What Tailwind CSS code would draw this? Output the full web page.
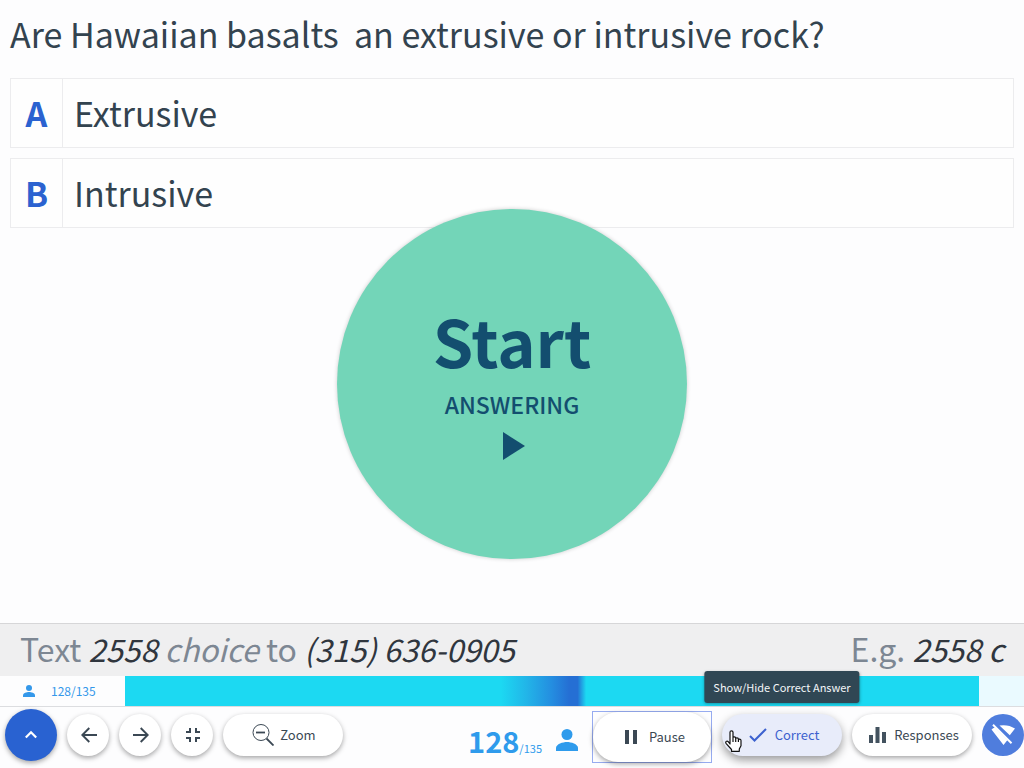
<!DOCTYPE html>
<html lang="en">
<head>
<meta charset="utf-8">
<meta name="viewport" content="width=device-width, initial-scale=1">
<title>Poll: Are Hawaiian basalts an extrusive or intrusive rock?</title>
<script src="https://cdn.jsdelivr.net/npm/@tailwindcss/browser@4"></script>
</head>
<body class="relative flex min-h-screen flex-col overflow-x-hidden bg-[#fdfdfe] font-['Noto_Sans_CJK_SC','Noto_Sans',sans-serif] text-[#33434f]">
  <main class="flex-1 px-[10px]">
    <h1 class="flex h-[78px] items-center pb-[10px] text-[34px] leading-10 whitespace-pre">Are Hawaiian basalts  an extrusive or intrusive rock?</h1>
    <ol class="flex flex-col gap-[10px] text-[34px] leading-10">
      <li class="flex h-[70px] border border-[#ececee] bg-[#fefefe]">
        <span class="flex w-[52px] items-center justify-center border-r border-[#ececee] font-bold text-[#2b62d0]">A</span>
        <span class="flex items-center pl-[11px]">Extrusive</span>
      </li>
      <li class="flex h-[70px] border border-[#ececee] bg-[#fefefe]">
        <span class="flex w-[52px] items-center justify-center border-r border-[#ececee] font-bold text-[#2b62d0]">B</span>
        <span class="flex items-center pl-[11px]">Intrusive</span>
      </li>
    </ol>
  </main>

  <!-- Start button floats over the question -->
  <div class="pointer-events-none absolute inset-0 flex items-center justify-center">
    <button class="pointer-events-auto flex size-[350px] flex-col items-center justify-center rounded-full bg-[#73d5b8] pb-1 text-[#134e6f] shadow-[0_0_4px_rgba(0,0,0,0.2)]">
      <span class="text-[65px] leading-[72px] font-bold">Start</span>
      <span class="mt-3 text-[23px] leading-8 font-medium">ANSWERING</span>
      <svg class="mt-3 ml-1 h-7 w-6" viewBox="0 0 24 28" fill="currentColor" aria-hidden="true"><path d="M1 0v28l22-14z"/></svg>
    </button>
  </div>

  <footer>
    <div class="flex h-[53px] items-center justify-between border-t border-[#d6d6d8] bg-[#efeff0] px-5 pb-1 text-[32px] leading-10 text-[#7d8793]">
      <p>Text <em class="text-[31px] text-[#30363e]">2558</em> <em class="text-[31px]">choice</em> to <em class="text-[31px] text-[#30363e]">(315) 636-0905</em></p>
      <p>E.g. <em class="text-[31px] text-[#30363e]">2558 c</em></p>
    </div>

    <div class="flex h-[31px] border-b border-[#dcdde0] text-[#3498ea]">
      <div class="flex w-[125px] items-center gap-4 pl-[23px] text-xs leading-4">
        <svg class="size-3" viewBox="0 0 22 22" fill="currentColor" aria-hidden="true"><circle cx="11" cy="5.500" r="5.500"/><path d="M0 22v-3c0-4 7-6 11-6s11 2 11 6v3z"/></svg>
        <span>128/135</span>
      </div>
      <div class="flex-1 bg-[#eafaff]">
        <div class="h-full w-[95%] bg-[linear-gradient(90deg,#1cd9f2_44%,#22b5e8_47%,#248de0_50%,#256fd4_52%,#256fd4_53%,#1cd9f2_54%)]"></div>
      </div>
    </div>

    <div class="relative flex h-[61px] items-center gap-[10px] pb-[5px] pl-[5px] text-[13px] leading-5">
      <button aria-label="Collapse toolbar" class="flex size-[52px] shrink-0 items-center justify-center rounded-full bg-[#2962d1] text-white shadow-[0_2px_5px_rgba(0,0,0,0.35)]">
        <svg class="size-4" viewBox="0 0 16 16" fill="none" stroke="currentColor" stroke-width="2.200" aria-hidden="true"><path d="M2.800 10.500 8 5.300l5.200 5.200"/></svg>
      </button>
      <button aria-label="Previous" class="flex size-[42px] shrink-0 items-center justify-center rounded-full bg-white pl-0.5 text-[#3b4854] shadow-[0_2px_5px_rgba(0,0,0,0.35)]">
        <svg class="size-4" viewBox="0 0 16 16" fill="none" stroke="currentColor" stroke-width="1.900" aria-hidden="true"><path d="M16 8H1.500M8.300 1 1.300 8l7 7"/></svg>
      </button>
      <button aria-label="Next" class="flex size-[42px] shrink-0 items-center justify-center rounded-full bg-white pl-0.5 text-[#3b4854] shadow-[0_2px_5px_rgba(0,0,0,0.35)]">
        <svg class="size-4" viewBox="0 0 16 16" fill="none" stroke="currentColor" stroke-width="1.900" aria-hidden="true"><path d="M0 8h14.500M7.700 1l7 7-7 7"/></svg>
      </button>
      <button aria-label="Exit full screen" class="flex size-[42px] shrink-0 items-center justify-center rounded-full bg-white pl-0.5 text-[#3b4854] shadow-[0_2px_5px_rgba(0,0,0,0.35)]">
        <svg class="size-4" viewBox="0 0 16 16" fill="none" stroke="currentColor" stroke-width="2" aria-hidden="true"><path d="M1 5h4V1M11 1v4h4M1 11h4v4M11 15v-4h4"/></svg>
      </button>
      <button class="flex h-[42px] w-[120px] shrink-0 items-center justify-center gap-1.5 rounded-full bg-white pl-0.5 text-[#3b4854] shadow-[0_2px_5px_rgba(0,0,0,0.35)]">
        <svg class="size-[22px]" viewBox="0 0 22 22" fill="none" stroke="currentColor" aria-hidden="true"><circle cx="9" cy="8.500" r="8"/><path d="M4 8.500h9" stroke-width="1.800"/><path d="m14.500 14.500 7 7" stroke-width="1.800"/></svg>
        Zoom
      </button>

      <div class="ml-auto flex items-center gap-[14px] self-end pb-[3px] text-[#2f9bec]">
        <p class="flex items-baseline"><span class="text-[29px] leading-10 font-bold">128</span><span class="text-[11px] font-normal">/135</span></p>
        <svg class="size-[22px]" viewBox="0 0 22 22" fill="currentColor" aria-hidden="true"><circle cx="11" cy="5.500" r="5.500"/><path d="M0 22v-3c0-4 7-6 11-6s11 2 11 6v3z"/></svg>
      </div>

      <div class="ml-1 shrink-0 self-end border border-[#96abf0]">
        <button class="flex h-[50px] w-[118px] items-center justify-center gap-3 rounded-full bg-white pl-1.5 text-[#3b4854] shadow-[0_2px_5px_rgba(0,0,0,0.35)]">
          <svg class="h-[14px] w-3" viewBox="0 0 12 14" fill="currentColor" aria-hidden="true"><path d="M0 0h4v14H0zM8 0h4v14H8z"/></svg>
          Pause
        </button>
      </div>
      <div class="relative shrink-0">
        <button aria-describedby="tip" class="flex h-[42px] w-[120px] items-center justify-center gap-2 rounded-full bg-[#e8ecfa] pl-1 text-[#3d62cf] shadow-[0_4px_10px_rgba(0,0,0,0.4)]">
          <svg class="h-3.5 w-[18px]" viewBox="0 0 18 14" fill="none" stroke="currentColor" stroke-width="2" aria-hidden="true"><path d="m1 8 4.500 4.500L17 1"/></svg>
          Correct
        </button>
        <span id="tip" role="tooltip" class="absolute bottom-[53px] left-1/2 -translate-x-1/2 rounded-[3px] bg-[#304754] px-[9px] py-[6px] text-[11px] leading-5 whitespace-nowrap text-[#f3f6f8] shadow-[0_1px_3px_rgba(0,0,0,0.3)]">Show/Hide Correct Answer</span>
        <!-- Hand pointer -->
        <svg class="absolute top-4 left-[3px] h-[22px] w-[17px]" viewBox="0 0 17 22" fill="#fff" stroke="#111" stroke-width="1.200" stroke-linejoin="round" aria-hidden="true"><path d="M5 14V2.300C5 .3 8 .3 8 2.300V8c0-1.600 2.700-1.600 2.700.3v.6c0-1.500 2.700-1.400 2.700.3v.8c.3-1.300 2.600-1.200 2.600.6v5.200L14.300 19v2.300H6.500V19.500L1.200 13.600C-.2 11.600 2 10.300 3.200 11.700zM8 8v4M10.700 9v3M13.400 10v2"/></svg>
      </div>
      <button class="flex h-[42px] w-[120px] shrink-0 items-center justify-center gap-2 rounded-full bg-white pl-1 text-[#3b4854] shadow-[0_2px_5px_rgba(0,0,0,0.35)]">
        <svg class="h-4 w-[17px]" viewBox="0 0 17 16" fill="#43525f" aria-hidden="true"><path d="M0 8h4v8H0zM6.500 0h4v16h-4zM13 5h4v11h-4z"/></svg>
        Responses
      </button>
      <button aria-label="Offline" class="flex size-[42px] shrink-0 items-center justify-center rounded-full bg-[#4f7ddd] text-white">
        <svg class="h-[22px] w-6" viewBox="0 0 24 22" aria-hidden="true"><path fill="currentColor" d="M8.500 1.500Q17 0 24 4.500L18.800 11.300zM.5 5.500Q2 4 4 3.500L16.500 16 12.500 21z"/><path d="m2 .8 18.500 18.500" stroke="currentColor" stroke-width="2"/></svg>
      </button>
    </div>
  </footer>
</body>
</html>
